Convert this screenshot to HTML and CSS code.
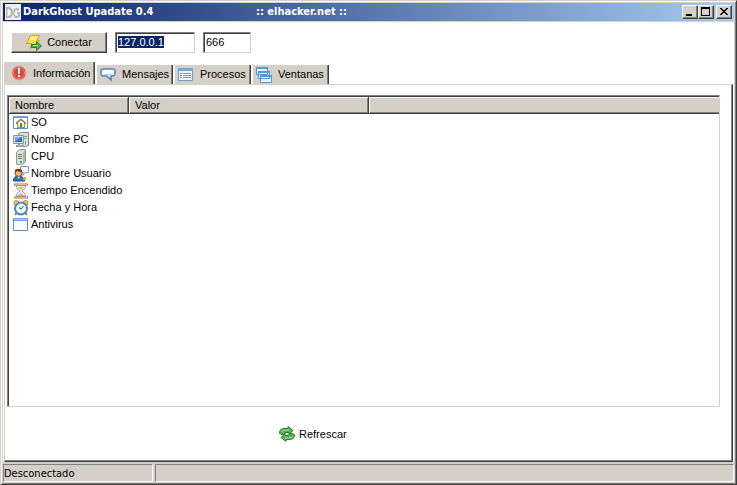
FILE: index.html
```html
<!DOCTYPE html>
<html lang="es">
<head>
<meta charset="utf-8">
<title>DarkGhost Upadate 0.4</title>
<link rel="stylesheet" href="styles.css">
</head>
<body>
<div class="window">
  <header class="titlebar">
    <svg class="icon" viewBox="0 0 16 16" aria-hidden="true"><path fill="#eeeeec" d="M0 0h16v16H0z"/><path fill="none" stroke="#b4b4b4" stroke-width="2" d="M2 4v9h2q3-1 3-4.500T4 4zM14 6q-5-3-5 3t5 3V9h-2"/><path fill="none" stroke="#fff" d="M3 5v7M10 8v3"/></svg>
    <h1 class="title">DarkGhost Upadate 0.4</h1>
    <span class="subtitle">:: elhacker.net ::</span>
    <div class="controls">
      <button class="control" type="button" aria-label="Minimizar"><svg viewBox="0 0 12 10" shape-rendering="crispEdges"><path d="M2 7h6v2H2z"/></svg></button>
      <button class="control" type="button" aria-label="Maximizar"><svg viewBox="0 0 12 10" shape-rendering="crispEdges"><path fill-rule="evenodd" d="M1 0h9v9H1zM2 2v6h7V2z"/></svg></button>
      <button class="control close" type="button" aria-label="Cerrar"><svg viewBox="0 0 12 10" shape-rendering="crispEdges"><path d="M2 1h2v1h1v1h2V2h1V1h2v1H9v1H8v1H7v1h1v1h1v1h1v1H8V7H7V6H5v1H4v1H2V7h1V6h1V5h1V4H4V3H3V2H2z"/></svg></button>
    </div>
  </header>

  <main class="client">
    <form class="toolbar">
      <button class="connect" type="button">
        <svg class="icon" viewBox="0 0 16 16" aria-hidden="true"><path fill="#f8e44c" stroke="#d9a51c" d="M4.500.5h9L11 5.500h2.500L4 13.500l2-5H.5z"/><path fill="#fff5a0" d="M5 2h6L9 5H4z"/><path fill="#5db348" stroke="#2a7a2c" d="M5.500 9.500h5v-3l5 4.500-5 4.500v-3h-5z"/><path stroke="#a5df8a" d="M7 10.500h5"/></svg>
        <span>Conectar</span>
      </button>
      <input class="field host" id="host" type="text" value="127.0.0.1" aria-label="Host">
      <input class="field port" type="text" value="666" aria-label="Puerto">
    </form>

    <nav class="tabs" role="tablist">
      <button class="tab active" type="button" role="tab" aria-selected="true">
        <svg class="icon" viewBox="0 0 16 16" aria-hidden="true"><circle cx="8" cy="8" r="7" fill="#dc4538" stroke="#f0a092"/><circle cx="8" cy="8" r="5.500" fill="none" stroke="#ef8171"/><path fill="#fff" d="M7 3h2v6H7zM7 10h2v2H7z"/></svg>
        <span>Información</span>
      </button>
      <button class="tab" type="button" role="tab" aria-selected="false">
        <svg class="icon" viewBox="0 0 16 16" aria-hidden="true"><path fill="#fff" stroke="#5582c4" stroke-width="1.500" d="M4 2h8q3 0 3 2v2q0 3-3 3h-1v4L7 9H4Q1 9 1 6V4q0-2 3-2z"/><path stroke="#b8d4f2" d="M4 7.500h8"/></svg>
        <span>Mensajes</span>
      </button>
      <button class="tab" type="button" role="tab" aria-selected="false">
        <svg class="icon" viewBox="0 0 16 16" aria-hidden="true"><path fill="#eaf1f6" stroke="#6e9bc9" d="M.5 1.500h14v12H.5z"/><path fill="#76a9da" d="M1 1h13v3H1z"/><path stroke="#8f9ca0" stroke-dasharray="2 1 8" d="M2 6.500h11M2 8.500h11M2 10.500h11"/></svg>
        <span>Procesos</span>
      </button>
      <button class="tab" type="button" role="tab" aria-selected="false">
        <svg class="icon" viewBox="0 0 16 16" aria-hidden="true"><g fill="#e7f0fa" stroke="#5d93c9"><path d="M.5.500h11v7H.5zM2.500 4.500h11v7h-11zM4.500 8.500h11v7h-11z"/></g><path fill="#5b99d3" d="M0 0h12v2H0zM2 4h12v2H2zM4 8h12v2H4z"/></svg>
        <span>Ventanas</span>
      </button>
    </nav>

    <section class="panel" role="tabpanel">
      <div class="list">
        <table class="grid">
          <thead>
            <tr><th class="col-name">Nombre</th><th class="col-value">Valor</th><th class="col-rest"></th></tr>
          </thead>
          <tbody>
            <tr><td><div class="item"><svg class="icon" viewBox="0 0 16 16" aria-hidden="true"><path fill="#fff" stroke="#5b91c6" d="M.5 1.500h14v12H.5z"/><path fill="#69a2d9" d="M1 1h13v2H1z"/><path fill="#f3efc8" stroke="#7d9b59" d="M4.500 8v4.500h7V8"/><path fill="none" stroke="#a86832" stroke-width="1.500" d="M3 8.500l5-4 5 4"/><path fill="#488c48" d="M7 8h2v4H7z"/></svg><span>SO</span></div></td><td></td><td></td></tr>
            <tr><td><div class="item"><svg class="icon" viewBox="0 0 16 16" aria-hidden="true"><path fill="#dce0da" stroke="#7d8a88" d="M5.500 1.500l3-1h7v13l-3 1h-2z"/><path stroke="#8aa393" d="M11 4.500h3M11 6.500h3M12.500 9v4"/><path fill="#d5dcdd" stroke="#89979c" d="M.5 3.500h10v8H.5z"/><path fill="#3473be" d="M2 5h7v5H2z"/><path fill="#72a9e1" d="M2 5h6L3 9H2z"/><path stroke="#93a0a0" stroke-width="2" d="M3 14h7M6 12v2"/></svg><span>Nombre PC</span></div></td><td></td><td></td></tr>
            <tr><td><div class="item"><svg class="icon" viewBox="0 0 16 16" aria-hidden="true"><path fill="#d8e0d7" stroke="#8d9b8f" d="M3.500 3.500l3-3h6v12l-3 3h-6z"/><path fill="#a9b8aa" d="M10 4l2-3v11l-2 3z"/><path stroke="#708274" d="M5 5.500h4M5 7.500h4M5 9.500h4"/><path fill="#4eaa4b" d="M7 12h2v2H7z"/></svg><span>CPU</span></div></td><td></td><td></td></tr>
            <tr><td><div class="item"><svg class="icon" viewBox="0 0 16 16" aria-hidden="true"><path fill="#fff" stroke="#6f9dd4" d="M7.500.5h8v6H12l-2 3V6.500H7.500z"/><path fill="#2478be" stroke="#174d80" d="M.5 15q0-5 5-5t6 5z"/><path fill="#fff" d="M4 10h3l-1 3z"/><circle cx="5.500" cy="7" r="3.500" fill="#f3b57b" stroke="#79471e"/><path fill="#74431d" d="M2 7q-1-5 4-4 4 0 3 3-4 0-5-1z"/><path fill="#f0a137" d="M10 11h3v3h-3z"/></svg><span>Nombre Usuario</span></div></td><td></td><td></td></tr>
            <tr><td><div class="item"><svg class="icon" viewBox="0 0 16 16" aria-hidden="true"><path fill="#e9f3fb" stroke="#85a9c9" d="M3 2.500h10q0 3-4 5.500 4 3 4 5.500H3q0-3 4-5.500-4-3-4-5.500z"/><path fill="#e9b64e" d="M5 4h6L8 7zM8 10l4 3H4z"/><path stroke="#b96e35" stroke-width="2" d="M1 1.500h14M1 14.500h14"/><path stroke="#efb47b" d="M2 1.500h12M2 14.500h12"/></svg><span>Tiempo Encendido</span></div></td><td></td><td></td></tr>
            <tr><td><div class="item"><svg class="icon" viewBox="0 0 16 16" aria-hidden="true"><path stroke="#bd7c21" stroke-width="2" d="M4 12l-2 3M12 12l2 3"/><circle cx="3.500" cy="3" r="2.500" fill="#f5c750" stroke="#c28725"/><circle cx="12.500" cy="3" r="2.500" fill="#f5c750" stroke="#c28725"/><circle cx="8" cy="8.500" r="6" fill="#edf6fd" stroke="#4789cb" stroke-width="2"/><path fill="none" stroke="#30475f" d="M10.500 6L8 9 6 7.500"/></svg><span>Fecha y Hora</span></div></td><td></td><td></td></tr>
            <tr><td><div class="item"><svg class="icon" viewBox="0 0 16 16" aria-hidden="true"><path fill="#fff" stroke="#5b91c6" d="M.5 1.500h14v12H.5z"/><path fill="#69a2d9" d="M1 1h13v3H1z"/><path fill="#a9cff2" d="M1 2h13v1H1z"/></svg><span>Antivirus</span></div></td><td></td><td></td></tr>
          </tbody>
        </table>
      </div>
      <div class="actions">
        <button class="refresh" type="button">
          <svg class="icon" viewBox="0 0 16 16" aria-hidden="true"><g fill="#59b54b" stroke="#2e7c32"><path d="M.5 7.500Q0 2.500 6 2.500h3v-2l5 4-4 4v-2H7q-2 0-2 2H3z"/><path d="M15.500 8.500q.5 5-5.500 5H7v2l-5-4 4-4v2h3q2 0 2-2h2z"/></g><path fill="none" stroke="#a4dc91" d="M2.500 6Q3 4 6 4h4M13.500 10q-.5 2-3.500 2H6"/></svg>
          <span>Refrescar</span>
        </button>
      </div>
    </section>
  </main>

  <footer class="statusbar">
    <div class="status main-status">Desconectado</div>
    <div class="status"></div>
  </footer>
</div>
<script>
  const host = document.getElementById("host");
  host.focus();
  host.select();
</script>
</body>
</html>
```

FILE: styles.css
```css
* {
  box-sizing: border-box;
}

:root {
  --face: #d4d0c8;
  --shadow: #808080;
  --dark: #404040;
}

body {
  margin: 0;
  font: 11px/13px "Liberation Sans", Arial, sans-serif;
  color: #000;
}

button,
input {
  font: inherit;
  color: inherit;
  margin: 0;
  border-radius: 0;
}

button {
  display: flex;
  align-items: center;
  white-space: nowrap;
}

.icon {
  width: 16px;
  height: 16px;
  flex: none;
}

.window {
  display: flex;
  flex-direction: column;
  min-height: 100vh;
  padding: 1px;
  background: var(--face);
  border: 1px solid var(--face);
  border-right-color: var(--dark);
  border-bottom-color: var(--dark);
  box-shadow: inset 1px 1px #fff, inset -1px -1px var(--shadow);
}

/* Title bar */
.titlebar {
  display: flex;
  align-items: center;
  height: 18px;
  margin: 1px;
  padding: 0 2px;
  background: linear-gradient(to right, #0a246a, #a6caf0);
  color: #fff;
  font: bold 11px/16px "DejaVu Sans Condensed", Tahoma, sans-serif;
}

.title {
  width: 233px;
  margin: 0 0 0 2px;
  font: inherit;
}

.subtitle {
  flex: 1;
}

.controls {
  display: flex;
}

.control {
  width: 16px;
  height: 14px;
  padding: 1px;
  background: var(--face);
  border: 1px solid #fff;
  border-right-color: var(--dark);
  border-bottom-color: var(--dark);
  box-shadow: inset -1px -1px var(--shadow);
}

.control svg {
  width: 12px;
  height: 10px;
}

.close {
  margin-left: 2px;
}

/* Client area */
.client {
  flex: 1;
  display: flex;
  flex-direction: column;
  margin: 0 1px;
  padding-right: 1px;
  background: #fff;
}

.toolbar {
  display: flex;
  align-items: flex-start;
  gap: 8px;
  padding: 10px 8px 9px;
}

.connect {
  justify-content: center;
  gap: 5px;
  width: 96px;
  height: 21px;
  padding: 0;
  background: var(--face);
  border: 1px solid #fff;
  border-right-color: var(--dark);
  border-bottom-color: var(--dark);
  box-shadow: inset -1px -1px var(--shadow);
}

.field {
  height: 21px;
  padding: 0 2px 2px;
  background: #fff;
  border: 1px solid var(--shadow);
  border-right-color: var(--face);
  border-bottom-color: var(--face);
  box-shadow: inset 1px 1px var(--dark);
  outline: none;
}

.host {
  width: 80px;
}

.host::selection {
  background: #0a246a;
  color: #fff;
}

.port {
  width: 48px;
}

/* Tabs */
.tabs {
  display: flex;
  align-items: flex-end;
  gap: 2px;
  padding-left: 1px;
}

.tab {
  gap: 6px;
  width: 76px;
  height: 19px;
  padding: 0 3px;
  background: var(--face);
  border: 0;
  border-right: 1px solid var(--dark);
  box-shadow: inset -1px 0 var(--shadow);
}

.tab.active {
  width: 91px;
  height: 22px;
  padding: 0 7px;
}

.panel {
  flex: 1;
  display: flex;
  flex-direction: column;
  margin-left: 1px;
  padding: 10px 12px 0 2px;
  border: 1px solid var(--face);
  border-right-color: var(--dark);
  border-bottom-color: var(--dark);
  box-shadow: inset -1px -1px var(--shadow);
}

.list {
  flex: 1;
  border: 1px solid var(--shadow);
  border-right-color: var(--face);
  border-bottom-color: var(--face);
  box-shadow: inset 1px 1px var(--dark);
  padding: 1px 0 0 1px;
}

.grid {
  width: 100%;
  table-layout: fixed;
  border-collapse: separate;
  border-spacing: 0;
}

.grid th {
  height: 17px;
  padding: 0 6px;
  background: var(--face);
  border-right: 1px solid var(--dark);
  border-bottom: 1px solid var(--dark);
  box-shadow: inset 1px 1px #fff, inset -1px -1px var(--shadow);
  font-weight: normal;
  text-align: left;
}

.grid .col-name {
  width: 120px;
}

.grid .col-value {
  width: 240px;
}

.grid .col-rest {
  border-right: 0;
  box-shadow: inset 1px 1px #fff, inset 0 -1px var(--shadow);
}

.grid td {
  height: 17px;
  padding: 0 4px;
}

.item {
  display: flex;
  align-items: center;
  gap: 2px;
  white-space: nowrap;
}

.actions {
  display: flex;
  padding: 19px 0 19px 272px;
}

.refresh {
  gap: 4px;
  padding: 0;
  background: none;
  border: 0;
}

/* Status bar */
.statusbar {
  display: flex;
  gap: 2px;
  padding: 2px 1px 1px;
  font: 11px/18px "DejaVu Sans Condensed", Tahoma, sans-serif;
}

.status {
  flex: 1;
  height: 18px;
  border: 1px solid var(--shadow);
  border-right-color: #fff;
  border-bottom-color: #fff;
}

.main-status {
  flex: 0 0 150px;
}
```
